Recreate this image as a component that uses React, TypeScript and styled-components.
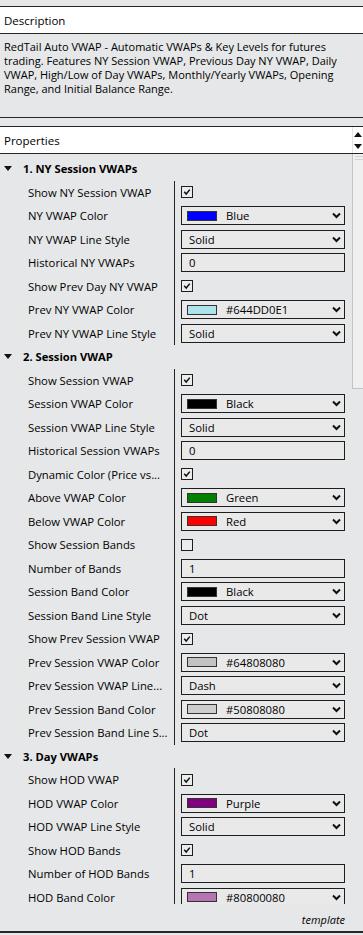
import React from "react";
import styled, { createGlobalStyle } from "styled-components";

const Global = createGlobalStyle`
  html, body { margin: 0; padding: 0; background: #e6e7e8; }
  body { font-family: "Open Sans", "Noto Sans", Arial, sans-serif; font-size: 11px; color: #000; }
  * { box-sizing: border-box; }
`;

const Page = styled.div`
  width: 363px;
  height: 935px;
  display: flex;
  flex-direction: column;
  background: #e6e7e8;
  overflow: hidden;
`;

const TopGap = styled.div`
  height: 6px;
  flex: none;
`;

const PanelHeader = styled.div`
  flex: none;
  height: 28px;
  background: #fff;
  border-top: 1px solid #262626;
  border-bottom: 1px solid #262626;
  display: flex;
  align-items: center;
  justify-content: space-between;
  padding-left: 4px;
  font-size: 11.5px;
`;

const DescBody = styled.div`
  flex: none;
  height: 84px;
  padding: 6px 4px 0 4px;
  line-height: 14px;
  font-size: 11px;
  border-bottom: 1px solid #262626;
`;

const DescLine = styled.div`
  white-space: nowrap;
`;

const Gap = styled.div`
  flex: none;
  height: 8px;
`;

const Spinner = styled.div`
  width: 11px;
  height: 100%;
  display: flex;
  flex-direction: column;
  align-items: center;
  justify-content: center;
  gap: 7px;
  border-left: 1px solid #e4e4e4;
`;

const GridArea = styled.div`
  flex: none;
  height: 750px;
  display: flex;
  overflow: hidden;
`;

const GridContent = styled.div`
  width: 352px;
  padding-top: 3px;
  display: flex;
  flex-direction: column;
`;

const ScrollTrack = styled.div`
  width: 11px;
  display: flex;
  flex-direction: column;
`;

const Thumb = styled.div`
  height: 235px;
  background: #efefef;
  border-left: 1px solid #c4c4c4;
  border-bottom: 1px solid #c4c4c4;
  padding: 2px 0 0 2px;
  display: flex;
  flex-direction: column;
  gap: 2px;
`;

const Grip = styled.div`
  height: 1px;
  background: #d2d2d2;
`;

const CategoryRow = styled.div`
  height: 23.5px;
  flex: none;
  display: flex;
  align-items: center;
  padding-left: 4px;
  font-weight: 700;
  font-size: 11.2px;
`;

const Triangle = styled.span`
  width: 0;
  height: 0;
  border-left: 4px solid transparent;
  border-right: 4px solid transparent;
  border-top: 5px solid #111;
  margin-right: 11px;
`;

const Row = styled.div`
  height: 23.5px;
  flex: none;
  display: grid;
  grid-template-columns: 175px 1fr;
`;

const Label = styled.div`
  border-right: 1px solid #262626;
  padding-left: 28px;
  display: flex;
  align-items: center;
  white-space: nowrap;
  overflow: hidden;
  font-size: 11.3px;
`;

const Value = styled.div`
  padding-left: 6px;
  display: flex;
  align-items: center;
`;

const Box = styled.div`
  width: 164px;
  height: 19px;
  border: 1px solid #1e1e1e;
  background: #e9e9ea;
  display: flex;
  align-items: center;
  padding-left: 7px;
  padding-right: 3px;
  font-size: 11.3px;
`;

const BoxText = styled.span`
  flex: 1;
  white-space: nowrap;
`;

const Swatch = styled.span<{ $c: string }>`
  width: 30px;
  height: 10px;
  border: 1px solid #333;
  background: ${(p) => p.$c};
  margin-left: -2px;
  margin-right: 9px;
  flex: none;
`;

const CheckBox = styled.div`
  width: 12px;
  height: 12px;
  border: 1px solid #1e1e1e;
  background: #ececec;
  display: flex;
  align-items: center;
  justify-content: center;
`;

const Footer = styled.div`
  flex: none;
  height: 29px;
  display: flex;
  align-items: center;
  justify-content: flex-end;
  padding: 4px 18px 0 0;
  font-style: italic;
  font-size: 11px;
  border-bottom: 2px solid #262626;
`;

const Chevron = () => (
  <svg width="9" height="7" viewBox="0 0 9 7">
    <polyline points="1,1.5 4.5,5 8,1.5" fill="none" stroke="#111" strokeWidth="2" />
  </svg>
);

const Check = () => (
  <svg width="8" height="8" viewBox="0 0 8 8">
    <polyline points="1.2,3.8 3.2,6 6.8,1.6" fill="none" stroke="#111" strokeWidth="1.5" />
  </svg>
);

const UpDown = () => (
  <>
    <svg width="8" height="5" viewBox="0 0 8 5">
      <polygon points="0,5 4,0 8,5" fill="#111" />
    </svg>
    <svg width="8" height="5" viewBox="0 0 8 5">
      <polygon points="0,0 8,0 4,5" fill="#111" />
    </svg>
  </>
);

type Prop =
  | { label: string; kind: "check"; on: boolean }
  | { label: string; kind: "color"; color: string; text: string }
  | { label: string; kind: "select"; text: string }
  | { label: string; kind: "text"; text: string };

type Section = { title: string; props: Prop[] };

const sections: Section[] = [
  {
    title: "1. NY Session VWAPs",
    props: [
      { label: "Show NY Session VWAP", kind: "check", on: true },
      { label: "NY VWAP Color", kind: "color", color: "#0000ff", text: "Blue" },
      { label: "NY VWAP Line Style", kind: "select", text: "Solid" },
      { label: "Historical NY VWAPs", kind: "text", text: "0" },
      { label: "Show Prev Day NY VWAP", kind: "check", on: true },
      { label: "Prev NY VWAP Color", kind: "color", color: "#ade3ea", text: "#644DD0E1" },
      { label: "Prev NY VWAP Line Style", kind: "select", text: "Solid" },
    ],
  },
  {
    title: "2. Session VWAP",
    props: [
      { label: "Show Session VWAP", kind: "check", on: true },
      { label: "Session VWAP Color", kind: "color", color: "#000000", text: "Black" },
      { label: "Session VWAP Line Style", kind: "select", text: "Solid" },
      { label: "Historical Session VWAPs", kind: "text", text: "0" },
      { label: "Dynamic Color (Price vs...", kind: "check", on: true },
      { label: "Above VWAP Color", kind: "color", color: "#008000", text: "Green" },
      { label: "Below VWAP Color", kind: "color", color: "#ff0000", text: "Red" },
      { label: "Show Session Bands", kind: "check", on: false },
      { label: "Number of Bands", kind: "text", text: "1" },
      { label: "Session Band Color", kind: "color", color: "#000000", text: "Black" },
      { label: "Session Band Line Style", kind: "select", text: "Dot" },
      { label: "Show Prev Session VWAP", kind: "check", on: true },
      { label: "Prev Session VWAP Color", kind: "color", color: "#c3c3c3", text: "#64808080" },
      { label: "Prev Session VWAP Line...", kind: "select", text: "Dash" },
      { label: "Prev Session Band Color", kind: "color", color: "#cdcdcd", text: "#50808080" },
      { label: "Prev Session Band Line S...", kind: "select", text: "Dot" },
    ],
  },
  {
    title: "3. Day VWAPs",
    props: [
      { label: "Show HOD VWAP", kind: "check", on: true },
      { label: "HOD VWAP Color", kind: "color", color: "#800080", text: "Purple" },
      { label: "HOD VWAP Line Style", kind: "select", text: "Solid" },
      { label: "Show HOD Bands", kind: "check", on: true },
      { label: "Number of HOD Bands", kind: "text", text: "1" },
      { label: "HOD Band Color", kind: "color", color: "#b674b2", text: "#80800080" },
    ],
  },
];

const Editor = ({ p }: { p: Prop }) => {
  switch (p.kind) {
    case "check":
      return <CheckBox>{p.on && <Check />}</CheckBox>;
    case "color":
      return (
        <Box>
          <Swatch $c={p.color} />
          <BoxText>{p.text}</BoxText>
          <Chevron />
        </Box>
      );
    case "select":
      return (
        <Box>
          <BoxText>{p.text}</BoxText>
          <Chevron />
        </Box>
      );
    default:
      return (
        <Box>
          <BoxText>{p.text}</BoxText>
        </Box>
      );
  }
};

export default function App() {
  return (
    <Page>
      <Global />
      <TopGap />
      <PanelHeader>Description</PanelHeader>
      <DescBody>
        <DescLine>RedTail Auto VWAP - Automatic VWAPs &amp; Key Levels for futures</DescLine>
        <DescLine>trading. Features NY Session VWAP, Previous Day NY VWAP, Daily</DescLine>
        <DescLine>VWAP, High/Low of Day VWAPs, Monthly/Yearly VWAPs, Opening</DescLine>
        <DescLine>Range, and Initial Balance Range.</DescLine>
      </DescBody>
      <Gap />
      <PanelHeader>
        Properties
        <Spinner>
          <UpDown />
        </Spinner>
      </PanelHeader>
      <GridArea>
        <GridContent>
          {sections.map((s) => (
            <React.Fragment key={s.title}>
              <CategoryRow>
                <Triangle />
                {s.title}
              </CategoryRow>
              {s.props.map((p) => (
                <Row key={p.label}>
                  <Label>{p.label}</Label>
                  <Value>
                    <Editor p={p} />
                  </Value>
                </Row>
              ))}
            </React.Fragment>
          ))}
        </GridContent>
        <ScrollTrack>
          <Thumb>
            <Grip />
            <Grip />
          </Thumb>
        </ScrollTrack>
      </GridArea>
      <Footer>template</Footer>
    </Page>
  );
}
